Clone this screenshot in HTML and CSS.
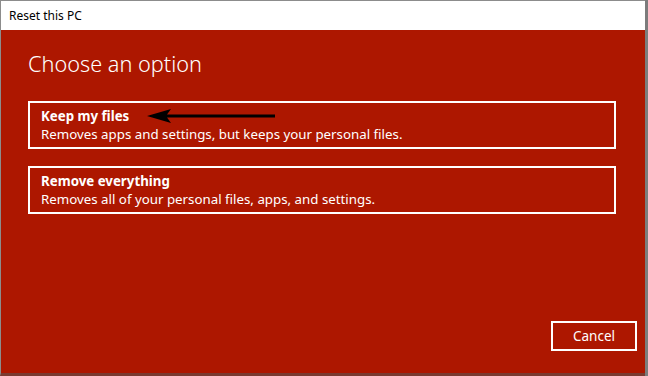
FILE: index.html
```html
<!DOCTYPE html>
<html>
<head>
<meta charset="utf-8">
<link rel="stylesheet" href="styles.css">
</head>
<body>
<div class="window">
  <div class="titlebar">Reset this PC</div>
  <div class="content">
    <h1 class="heading">Choose an option</h1>
    <div class="options">
      <div class="option first">
        <div class="opt-title">Keep my files</div>
        <div class="opt-desc">Removes apps and settings, but keeps your personal files.</div>
        <svg class="arrow" width="130" height="16" viewBox="0 0 130 16">
          <path d="M0 8 L24 1 L20 6.5 L128 6.5 L128 9.5 L20 9.5 L24 15 Z" fill="#000"/>
        </svg>
      </div>
      <div class="option">
        <div class="opt-title">Remove everything</div>
        <div class="opt-desc">Removes all of your personal files, apps, and settings.</div>
      </div>
    </div>
    <div class="footer">
      <button class="cancel">Cancel</button>
    </div>
  </div>
</div>
</body>
</html>
```
FILE: styles.css
```css
html, body {
  margin: 0;
  padding: 0;
  width: 648px;
  height: 376px;
  overflow: hidden;
  background: #7c7c7c;
}
.window {
  width: 644px;
  height: 372px;
  border-top: 1px solid #8c8c8c;
  border-left: 1px solid #8c8c8c;
  border-bottom: 3px solid #7a3a30;
  display: flex;
  flex-direction: column;
  font-family: "Noto Sans", "Open Sans", sans-serif;
}
.titlebar {
  height: 29px;
  background: #ffffff;
  color: #000;
  font-size: 12px;
  line-height: 29px;
  padding-left: 8px;
  flex: none;
}
.content {
  flex: 1;
  background: #ad1700;
  padding: 0 0 0 27px;
  display: flex;
  flex-direction: column;
  color: #fff;
}
.heading {
  margin: 20px 0 0 0;
  font-size: 21.7px;
  font-weight: 300;
  line-height: 28px;
}
.options {
  margin-top: 23px;
  display: flex;
  flex-direction: column;
  gap: 17px;
  width: 588px;
}
.option {
  position: relative;
  border: 2px solid #fff;
  padding: 4px 0 0 11px;
  height: 40px;
}
.opt-title {
  font-weight: 700;
  font-size: 13.3px;
  line-height: 18px;
}
.opt-desc {
  font-size: 13.3px;
  line-height: 19px;
}
.arrow {
  position: absolute;
  left: 117px;
  top: 5px;
}
.footer {
  margin-top: auto;
  display: flex;
  justify-content: flex-end;
  padding: 0 8px 22px 0;
}
.cancel {
  width: 86px;
  height: 30px;
  background: transparent;
  border: 2px solid #fff;
  color: #fff;
  font-family: "Noto Sans", "Open Sans", sans-serif;
  font-size: 13.5px;
  padding: 0;
}
```
